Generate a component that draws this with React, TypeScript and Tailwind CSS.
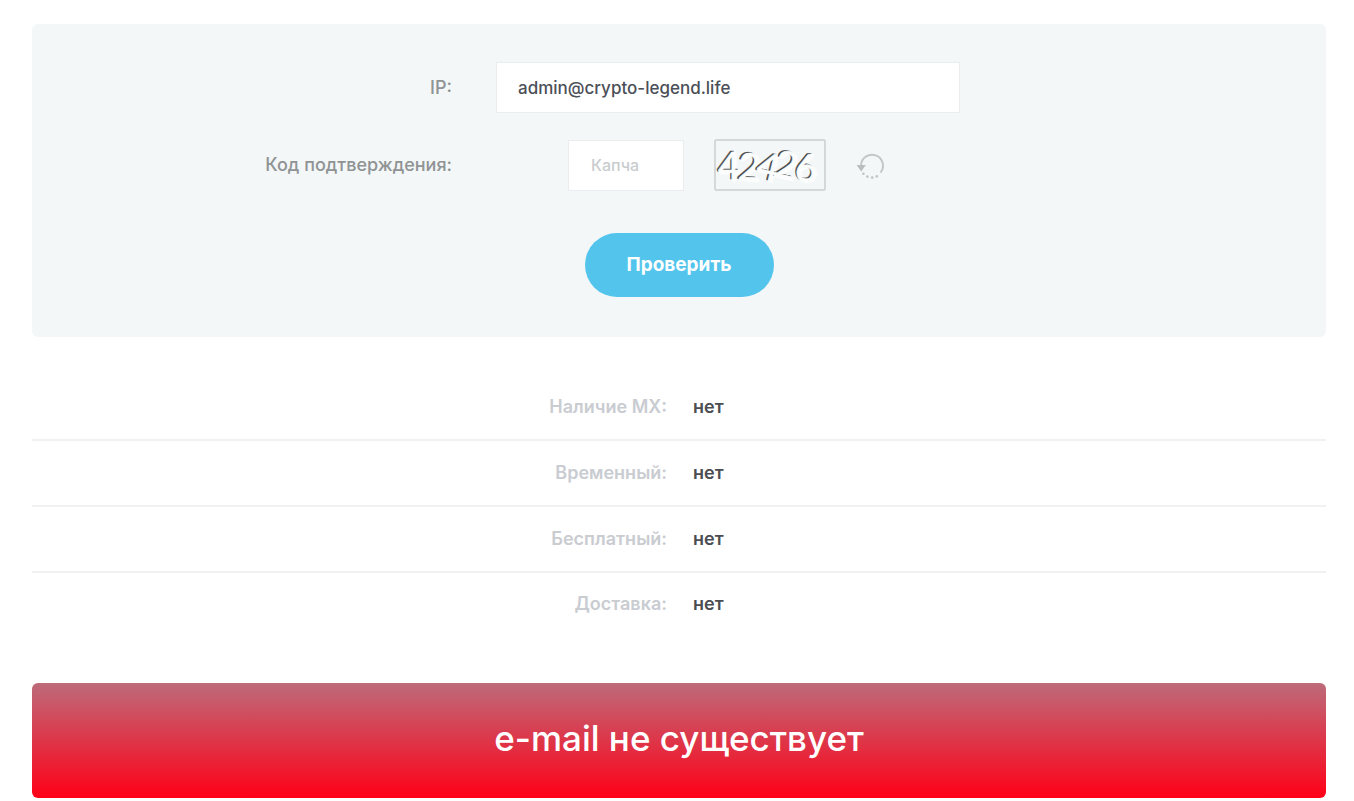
import React, { useState } from 'react';

interface CheckResult {
  label: string;
  value: string;
}

interface CaptchaDigit {
  char: string;
  x: number;
  y: number;
  rotate: number;
}

const results: CheckResult[] = [
  { label: 'Наличие MX:', value: 'нет' },
  { label: 'Временный:', value: 'нет' },
  { label: 'Бесплатный:', value: 'нет' },
  { label: 'Доставка:', value: 'нет' },
];

const digits: CaptchaDigit[] = [
  { char: '4', x: 4, y: 41, rotate: 0 },
  { char: '2', x: 24, y: 41, rotate: 4 },
  { char: '4', x: 43, y: 41, rotate: 14 },
  { char: '2', x: 61, y: 39, rotate: 12 },
  { char: '6', x: 81, y: 42, rotate: 2 },
];

interface DigitLayerProps {
  fill: string;
  dx: number;
  dy: number;
  stroke?: number;
}

const DigitLayer: React.FC<DigitLayerProps> = ({ fill, dx, dy, stroke = 0 }) => (
  <g fill={fill} stroke={fill} strokeWidth={stroke} transform={`translate(${dx} ${dy})`}>
    {digits.map((d, i) => (
      <text key={i} x={d.x} y={d.y} transform={`rotate(${d.rotate} ${d.x + 10} ${d.y - 12})`}>
        {d.char}
      </text>
    ))}
  </g>
);

// Embossed digits: white edge, dark edge, then the face on top
const CaptchaImage: React.FC = () => (
  <svg
    width="112"
    height="52"
    viewBox="0 0 112 52"
    role="img"
    aria-label="Капча"
    className="shrink-0 overflow-visible"
  >
    <rect x="1" y="1" width="110" height="50" rx="1" fill="#f4f7f8" stroke="#cbcdce" strokeWidth="1.5" />
    <g fontFamily="Lato, sans-serif" fontSize="38">
      <DigitLayer fill="#ffffff" dx={1} dy={1} stroke={1} />
      <DigitLayer fill="#4a4c4d" dx={-1.6} dy={-0.6} stroke={0.3} />
      <DigitLayer fill="#fbfdfd" dx={0} dy={0.4} stroke={0.6} />
    </g>
  </svg>
);

const RefreshIcon: React.FC = () => (
  <svg width="28" height="30" viewBox="0 -4 28 30" fill="none" aria-hidden="true">
    <path d="M5 11.5A11 11 0 1 1 24.6 18.6" stroke="#c3c7ca" strokeWidth="2" />
    <path d="M0.6 11h9.2L5.2 17.4z" fill="#b9bdc0" />
    <g fill="#bfc3c6">
      <circle cx="7.4" cy="19.8" r="1.3" />
      <circle cx="11.4" cy="22.6" r="1.3" />
      <circle cx="16.2" cy="23.6" r="1.3" />
      <circle cx="20.8" cy="22.4" r="1.3" />
    </g>
  </svg>
);

export default function App() {
  const [email, setEmail] = useState('admin@crypto-legend.life');
  const [captcha, setCaptcha] = useState('');

  return (
    <main className="bg-white pt-6 pr-7 pb-1 pl-8 font-[Inter,sans-serif]">
      <form
        className="rounded-md bg-[#f3f7f8] pt-[38px] pb-10"
        onSubmit={(e) => e.preventDefault()}
      >
        <div className="flex items-center gap-11">
          <label htmlFor="email" className="w-[420px] text-right text-lg font-medium text-[#8f9394]">
            IP:
          </label>
          <input
            id="email"
            type="text"
            value={email}
            onChange={(e) => setEmail(e.target.value)}
            className="h-[51px] w-[464px] border border-[#eaedef] bg-white px-[21px] text-[17px] font-medium text-[#4b4f57] outline-none"
          />
        </div>

        <div className="mt-[26px] flex items-center gap-11">
          <label htmlFor="captcha" className="w-[420px] text-right text-lg font-medium text-[#8f9394]">
            Код подтверждения:
          </label>
          <div className="flex w-[464px] items-center justify-center gap-[30px] pr-1">
            <input
              id="captcha"
              type="text"
              placeholder="Капча"
              value={captcha}
              onChange={(e) => setCaptcha(e.target.value)}
              className="h-[51px] w-[116px] border border-[#eaedef] bg-white px-[22px] text-base font-medium text-[#4b4f57] outline-none placeholder:text-[#c9cccf]"
            />
            <CaptchaImage />
            <button type="button" aria-label="Обновить">
              <RefreshIcon />
            </button>
          </div>
        </div>

        <div className="mt-[42px] flex justify-center">
          <button
            type="submit"
            className="h-16 w-[189px] rounded-full bg-[#53c4ec] text-[19px] font-bold text-white"
          >
            Проверить
          </button>
        </div>
      </form>

      <table className="mt-[37px] w-full border-collapse text-lg">
        <tbody>
          {results.map((r) => (
            <tr
              key={r.label}
              className="h-[66px] border-b-2 border-[#f0f1f2] last:h-[62px] last:border-b-0"
            >
              <th scope="row" className="w-1/2 pr-3 text-right font-semibold text-[#c9ccd1]">
                {r.label}
              </th>
              <td className="w-1/2 pl-[14px] font-semibold text-[#4b4d52]">{r.value}</td>
            </tr>
          ))}
        </tbody>
      </table>

      <div className="mt-[49px] flex h-[115px] items-center justify-center rounded-md bg-linear-to-b/srgb from-[#bd6b7a] to-[#ff0017] pb-1">
        <p className="text-[35px] font-medium text-white">e-mail не существует</p>
      </div>
    </main>
  );
}
